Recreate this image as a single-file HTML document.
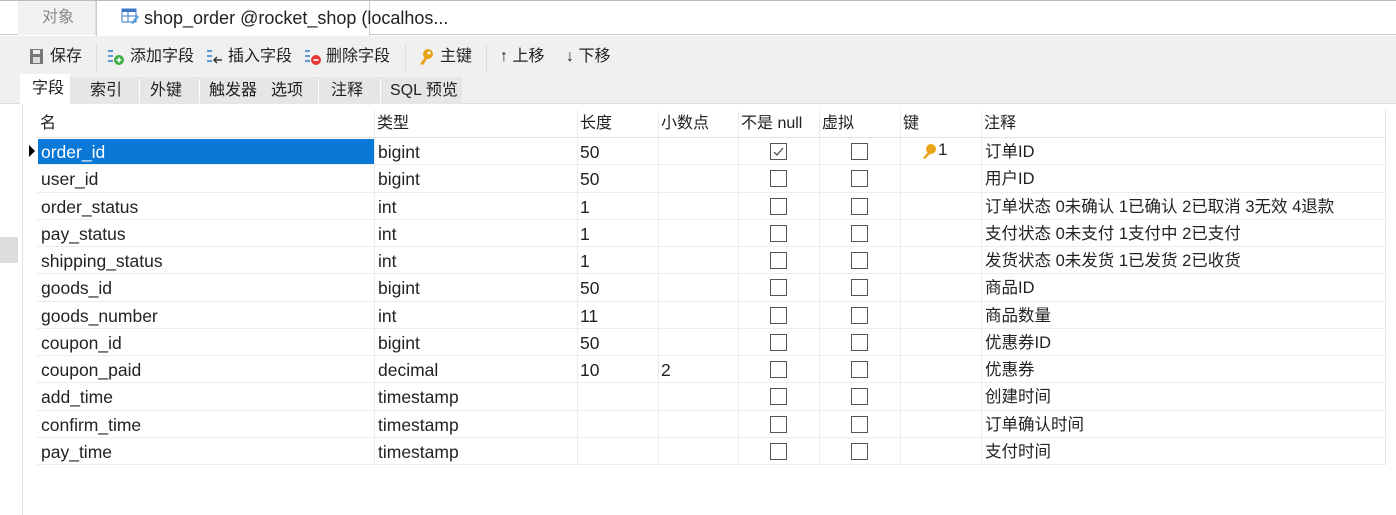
<!DOCTYPE html>
<html><head><meta charset="utf-8"><style>
*{margin:0;padding:0;box-sizing:border-box}
body{width:1396px;height:515px;overflow:hidden;background:#fff;font-family:"Liberation Sans","Noto Sans CJK SC",sans-serif;color:#222;position:relative}
.a{position:absolute;white-space:nowrap}
.t{font-size:16px;line-height:20px}
.cb{position:absolute;width:17px;height:17px;border:1px solid #555;background:#fff}
</style></head><body>
<div class="a" style="left:0;top:0;width:1396px;height:35px;background:#fff;border-bottom:1px solid #c8c8c8"></div>
<div class="a" style="left:0;top:0;width:1396px;height:1px;background:#bbb"></div>
<div class="a" style="left:18px;top:1px;width:78px;height:34px;background:#f2f2f2;border-right:1px solid #ddd"></div>
<div class="a t" style="left:42px;top:8px;color:#888">对象</div>
<div class="a" style="left:96px;top:1px;width:274px;height:35px;background:#fff;border-left:1px solid #ccc;border-right:1px solid #ccc"></div>
<svg class="a" style="left:121px;top:7px" width="18" height="18"><rect x="1" y="2" width="14" height="13" fill="#fff" stroke="#3a78c6"/><rect x="1" y="2" width="14" height="3" fill="#3a78c6"/><line x1="1" y1="9" x2="15" y2="9" stroke="#3a78c6"/><line x1="7" y1="5" x2="7" y2="15" stroke="#3a78c6"/><path d="M10 16 L16 8 L18 10 L12 17Z" fill="#5aa0e0"/></svg>
<div class="a t" style="left:144px;top:7px;font-size:18px;line-height:22px">shop_order @rocket_shop (localhos...</div>
<div class="a" style="left:0;top:36px;width:1396px;height:68px;background:#f0f0f0;border-bottom:1px solid #ddd"></div>
<svg class="a" style="left:29px;top:48px" width="16" height="18"><rect x="1" y="1" width="13" height="15" fill="#777"/><rect x="4" y="2" width="7" height="4" fill="#eee"/><rect x="4" y="9" width="7" height="6" fill="#ddd"/></svg>
<div class="a t" style="left:50px;top:47px">保存</div>
<div class="a" style="left:96px;top:44px;width:1px;height:28px;background:#ddd"></div>
<svg class="a" style="left:107px;top:48px" width="20" height="18"><g fill="#5b9bd5"><rect x="1" y="2" width="5" height="2"/><rect x="1" y="7" width="5" height="2"/><rect x="1" y="12" width="5" height="2"/></g><circle cx="12" cy="12" r="5" fill="#3cb043"/><path d="M9.5 12h5M12 9.5v5" stroke="#fff" stroke-width="1.6"/></svg>
<div class="a t" style="left:130px;top:47px">添加字段</div>
<svg class="a" style="left:206px;top:48px" width="20" height="18"><g fill="#5b9bd5"><rect x="1" y="2" width="5" height="2"/><rect x="1" y="7" width="5" height="2"/><rect x="1" y="12" width="5" height="2"/></g><path d="M16 12h-7M11 9l-3 3 3 3" stroke="#333" stroke-width="1.4" fill="none"/></svg>
<div class="a t" style="left:228px;top:47px">插入字段</div>
<svg class="a" style="left:304px;top:48px" width="20" height="18"><g fill="#5b9bd5"><rect x="1" y="2" width="5" height="2"/><rect x="1" y="7" width="5" height="2"/><rect x="1" y="12" width="5" height="2"/></g><circle cx="12" cy="12" r="5" fill="#e53935"/><path d="M9.5 12h5" stroke="#fff" stroke-width="1.6"/></svg>
<div class="a t" style="left:326px;top:47px">删除字段</div>
<div class="a" style="left:405px;top:44px;width:1px;height:28px;background:#ddd"></div>
<svg class="a" style="left:419px;top:48px" width="16" height="18"><circle cx="9" cy="6" r="5" fill="#e8a317"/><path d="M6 9 L1 16 L4 17 L8 11Z" fill="#e8a317"/><circle cx="10" cy="5" r="1.5" fill="#fff"/></svg>
<div class="a t" style="left:440px;top:47px">主键</div>
<div class="a" style="left:486px;top:44px;width:1px;height:28px;background:#ddd"></div>
<div class="a t" style="left:500px;top:47px">↑ 上移</div>
<div class="a t" style="left:566px;top:47px">↓ 下移</div>
<div class="a" style="left:20px;top:74px;width:50px;height:30px;background:#fff"></div>
<div class="a t" style="left:32px;top:79px">字段</div>
<div class="a" style="left:70px;top:77px;width:392px;height:27px;background:#e6e6e6"></div>
<div class="a t" style="left:90px;top:81px">索引</div>
<div class="a" style="left:139px;top:79px;width:1px;height:24px;background:#fff"></div>
<div class="a t" style="left:150px;top:81px">外键</div>
<div class="a" style="left:199px;top:79px;width:1px;height:24px;background:#fff"></div>
<div class="a t" style="left:209px;top:81px">触发器</div>
<div class="a t" style="left:271px;top:81px">选项</div>
<div class="a" style="left:318px;top:79px;width:1px;height:24px;background:#fff"></div>
<div class="a t" style="left:331px;top:81px">注释</div>
<div class="a" style="left:380px;top:79px;width:1px;height:24px;background:#fff"></div>
<div class="a t" style="left:390px;top:81px">SQL 预览</div>
<div class="a" style="left:22px;top:104px;width:1px;height:411px;background:#e2e2e2"></div>
<div class="a" style="left:0;top:237px;width:18px;height:26px;background:#ddd"></div>
<div id="g"></div>
<script>
var cols=[37,374,577,658,738,819,900,981,1386];
var rows=[
["order_id","bigint","50","",1,0,1,"订单ID"],
["user_id","bigint","50","",0,0,0,"用户ID"],
["order_status","int","1","",0,0,0,"订单状态 0未确认 1已确认 2已取消 3无效 4退款"],
["pay_status","int","1","",0,0,0,"支付状态 0未支付 1支付中 2已支付"],
["shipping_status","int","1","",0,0,0,"发货状态 0未发货 1已发货 2已收货"],
["goods_id","bigint","50","",0,0,0,"商品ID"],
["goods_number","int","11","",0,0,0,"商品数量"],
["coupon_id","bigint","50","",0,0,0,"优惠券ID"],
["coupon_paid","decimal","10","2",0,0,0,"优惠券"],
["add_time","timestamp","","",0,0,0,"创建时间"],
["confirm_time","timestamp","","",0,0,0,"订单确认时间"],
["pay_time","timestamp","","",0,0,0,"支付时间"]];
var h='';
var top0=110,hh=28,rh=27.25;
h+='<div class="a" style="left:'+cols[0]+'px;top:'+top0+'px;width:'+(cols[8]-cols[0])+'px;height:'+(hh+rh*12)+'px;border-right:1px solid #e6e6e6;border-bottom:1px solid #e6e6e6"></div>';
h+='<div class="a" style="left:'+cols[0]+'px;top:'+(top0+hh-1)+'px;width:'+(cols[8]-cols[0])+'px;height:1px;background:#e2e2e2"></div>';
for(var i=1;i<8;i++)h+='<div class="a" style="left:'+cols[i]+'px;top:'+top0+'px;width:1px;height:'+(hh+rh*12)+'px;background:#ececec"></div>';
var hd=["名","类型","长度","小数点","不是 null","虚拟","键","注释"];
for(var i=0;i<8;i++)h+='<div class="a t" style="left:'+(cols[i]+3)+'px;top:'+(top0+4)+'px">'+hd[i]+'</div>';
var fs='font-size:17.5px;';
for(var r=0;r<12;r++){var y=top0+hh+r*rh;var R=rows[r];
h+='<div class="a" style="left:'+cols[0]+'px;top:'+(y+rh-1)+'px;width:'+(cols[8]-cols[0])+'px;height:1px;background:#ececec"></div>';
if(r==0){h+='<div class="a" style="left:38px;top:'+(y+1)+'px;width:336px;height:'+(rh-2)+'px;background:#0a78d7"></div>';
h+='<div class="a" style="left:29px;top:'+(y+7)+'px;width:0;height:0;border-left:6px solid #000;border-top:6px solid transparent;border-bottom:6px solid transparent"></div>';}
var ty=y+4;
h+='<div class="a t" style="left:'+(cols[0]+4)+'px;top:'+ty+'px;'+fs+(r==0?'color:#fff':'')+'">'+R[0]+'</div>';
h+='<div class="a t" style="left:'+(cols[1]+4)+'px;top:'+ty+'px;'+fs+'">'+R[1]+'</div>';
h+='<div class="a t" style="left:'+(cols[2]+3)+'px;top:'+ty+'px;'+fs+'">'+R[2]+'</div>';
h+='<div class="a t" style="left:'+(cols[3]+3)+'px;top:'+ty+'px;'+fs+'">'+R[3]+'</div>';
h+='<div class="cb" style="left:770px;top:'+(y+5)+'px">'+(R[4]?'<svg width="15" height="15" style="display:block"><path d="M3 8l3 3 6-7" stroke="#444" stroke-width="1.2" fill="none"/></svg>':'')+'</div>';
h+='<div class="cb" style="left:851px;top:'+(y+5)+'px"></div>';
if(R[6])h+='<svg class="a" style="left:921px;top:'+(y+5)+'px" width="16" height="18"><circle cx="10" cy="6" r="5" fill="#e8a317"/><path d="M7 9 L2 15 L4 16 L9 11Z" fill="#e8a317"/></svg><div class="a t" style="left:938px;top:'+(y+2)+'px;font-size:17px">1</div>';
h+='<div class="a t" style="left:'+(cols[7]+4)+'px;top:'+ty+'px;font-size:16.5px">'+R[7]+'</div>';
}
document.getElementById('g').innerHTML=h;
</script>
</body></html>
